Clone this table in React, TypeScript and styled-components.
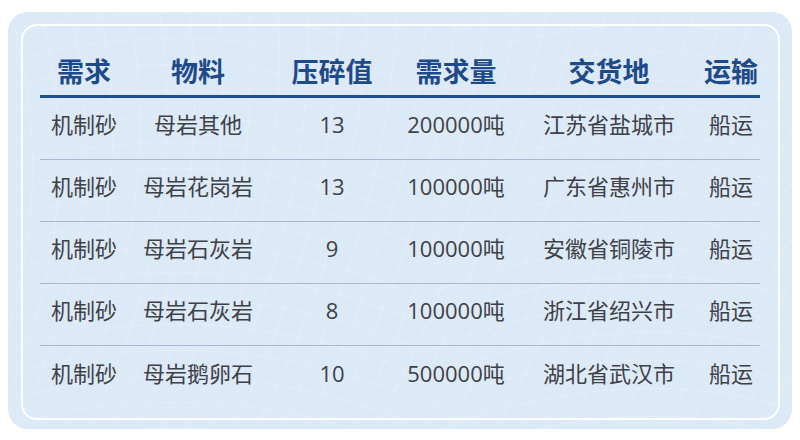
import React from "react";
import styled, { createGlobalStyle } from "styled-components";

const Global = createGlobalStyle`
  html, body { margin: 0; padding: 0; background: #ffffff; }
  body { font-family: "Noto Sans CJK SC", "Noto Sans", sans-serif; }
`;

const Outer = styled.div`
  position: relative;
  box-sizing: border-box;
  margin: 12px 0 0 8px;
  width: 784px;
  height: 417px;
  padding: 12px 12px 9px 13px;
  border-radius: 20px;
  background: #dce9f7;
  overflow: hidden;
`;

const Deco = styled.svg`
  position: absolute;
  inset: 0;
  width: 100%;
  height: 100%;
  pointer-events: none;
`;

const Inner = styled.div`
  position: relative;
  box-sizing: border-box;
  height: 100%;
  border: 2px solid #ffffff;
  border-radius: 16px;
  padding: 0 18px 0 17px;
`;

const COLS = "88px 140px 128px 120px 186px 58px";

const HeadRow = styled.div`
  display: grid;
  grid-template-columns: ${COLS};
  height: 72px;
  box-sizing: border-box;
  padding-top: 20px;
  align-items: center;
  border-bottom: 3px solid #234e8e;
`;

const HeadCell = styled.div`
  text-align: center;
  font-size: 27px;
  font-weight: 700;
  color: #1f4a89;
  line-height: 1;
  white-space: nowrap;
`;

const Row = styled.div<{ $last?: boolean }>`
  display: grid;
  grid-template-columns: ${COLS};
  height: 62px;
  box-sizing: border-box;
  align-items: center;
  padding-bottom: 9px;
  border-bottom: ${(p) => (p.$last ? "none" : "1px solid #a6b9cf")};
`;

const Cell = styled.div`
  text-align: center;
  font-family: "Open Sans", "Noto Sans CJK SC", sans-serif;
  font-size: 22px;
  color: #3e4146;
  line-height: 1;
  white-space: nowrap;
`;

const headers = ["需求", "物料", "压碎值", "需求量", "交货地", "运输"];
const rows = [
  ["机制砂", "母岩其他", "13", "200000吨", "江苏省盐城市", "船运"],
  ["机制砂", "母岩花岗岩", "13", "100000吨", "广东省惠州市", "船运"],
  ["机制砂", "母岩石灰岩", "9", "100000吨", "安徽省铜陵市", "船运"],
  ["机制砂", "母岩石灰岩", "8", "100000吨", "浙江省绍兴市", "船运"],
  ["机制砂", "母岩鹅卵石", "10", "500000吨", "湖北省武汉市", "船运"],
];

function Pattern() {
  const paths: string[] = [];
  for (let i = 0; i < 40; i++) {
    const x = -100 + i * 24;
    paths.push(`M ${x} 440 Q ${x + 120} 220 ${x + 40 + i * 6} -10`);
  }
  for (let i = 0; i < 18; i++) {
    const y = i * 26;
    paths.push(`M -10 ${y} Q 200 ${y - 60} 400 ${y + 20}`);
  }
  for (let i = 0; i < 18; i++) {
    const y = i * 28;
    paths.push(`M 420 ${y + 30} Q 620 ${y - 50} 800 ${y + 10}`);
  }
  return (
    <Deco viewBox="0 0 784 417" preserveAspectRatio="none">
      {paths.map((d, i) => (
        <path key={i} d={d} fill="none" stroke="#ffffff" strokeOpacity={0.3} strokeWidth={0.8} />
      ))}
    </Deco>
  );
}

export default function App() {
  return (
    <>
      <Global />
      <Outer>
        <Pattern />
        <Inner>
          <HeadRow>
            {headers.map((h) => (
              <HeadCell key={h}>{h}</HeadCell>
            ))}
          </HeadRow>
          {rows.map((r, i) => (
            <Row key={i} $last={i === rows.length - 1}>
              {r.map((c, j) => (
                <Cell key={j}>{c}</Cell>
              ))}
            </Row>
          ))}
        </Inner>
      </Outer>
    </>
  );
}
